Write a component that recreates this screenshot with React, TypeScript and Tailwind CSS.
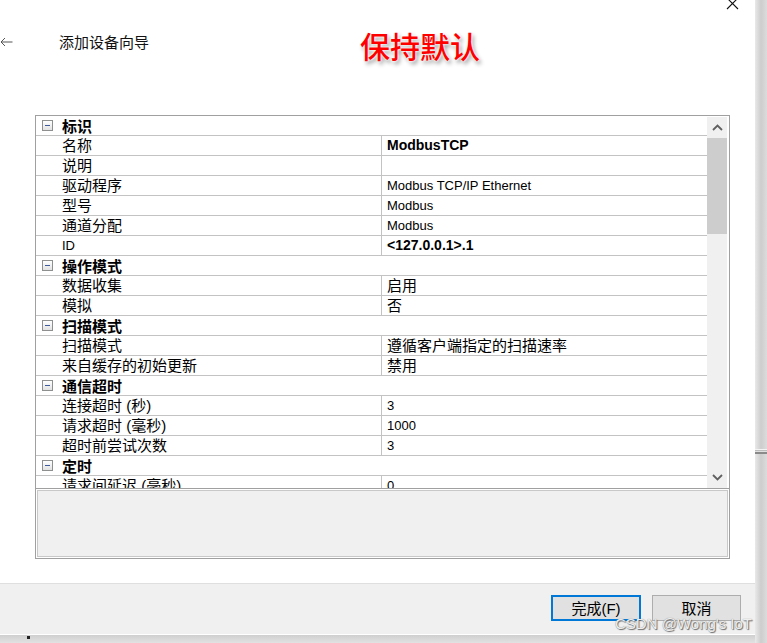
import React from 'react';

// KEPServerEX "添加设备向导" final page — property grid summary with
// the red "保持默认" annotation painted over the header.

type Row =
  | { kind: 'cat'; label: string }
  | { kind: 'prop'; label: string; value: string; bold?: boolean };

const ROWS: Row[] = [
  { kind: 'cat', label: '标识' },
  { kind: 'prop', label: '名称', value: 'ModbusTCP', bold: true },
  { kind: 'prop', label: '说明', value: '' },
  { kind: 'prop', label: '驱动程序', value: 'Modbus TCP/IP Ethernet' },
  { kind: 'prop', label: '型号', value: 'Modbus' },
  { kind: 'prop', label: '通道分配', value: 'Modbus' },
  { kind: 'prop', label: 'ID', value: '<127.0.0.1>.1', bold: true },
  { kind: 'cat', label: '操作模式' },
  { kind: 'prop', label: '数据收集', value: '启用' },
  { kind: 'prop', label: '模拟', value: '否' },
  { kind: 'cat', label: '扫描模式' },
  { kind: 'prop', label: '扫描模式', value: '遵循客户端指定的扫描速率' },
  { kind: 'prop', label: '来自缓存的初始更新', value: '禁用' },
  { kind: 'cat', label: '通信超时' },
  { kind: 'prop', label: '连接超时 (秒)', value: '3' },
  { kind: 'prop', label: '请求超时 (毫秒)', value: '1000' },
  { kind: 'prop', label: '超时前尝试次数', value: '3' },
  { kind: 'cat', label: '定时' },
  { kind: 'prop', label: '请求间延迟 (毫秒)', value: '0' },
];

const hasCjk = (s: string) => /[\u4e00-\u9fff]/.test(s);

const CJK = '[font-family:"Liberation_Sans","Noto_Sans_CJK_SC",sans-serif]';

function MinusBox() {
  return (
    <span className="grid h-[11px] w-[11px] place-items-center border border-[#8e8f8f] bg-linear-to-b from-white to-[#e2e2e2]">
      <span className="h-[1px] w-[5px] bg-[#3f5a9c]" />
    </span>
  );
}

function GridRow({ row }: { row: Row }) {
  if (row.kind === 'cat') {
    return (
      <div className="flex h-[20px] shrink-0 items-center border-b border-[#c3c3c3]">
        <span className="ml-[6px] mr-[9px] flex w-[11px] justify-center">
          <MinusBox />
        </span>
        <span
          className="text-[15px] font-bold leading-[19px] text-black"
          style={{ fontFamily: '"Noto Sans CJK SC", sans-serif' }}
        >
          {row.label}
        </span>
      </div>
    );
  }
  const cjkVal = hasCjk(row.value);
  return (
    <div className="flex h-[20px] shrink-0 border-b border-[#c3c3c3]">
      <div className="w-[26px] shrink-0" />
      <div
        className={
          hasCjk(row.label)
            ? 'w-[320px] shrink-0 border-r border-[#c3c3c3] text-[15px] leading-[19px] text-black'
            : 'w-[320px] shrink-0 border-r border-[#c3c3c3] text-[13px] leading-[19px] text-black'
        }
        style={{ fontFamily: '"Liberation Sans", "Noto Sans CJK SC", sans-serif' }}
      >
        {row.label}
      </div>
      <div
        className={
          row.bold
            ? 'flex-1 pl-[5px] text-[14px] font-bold leading-[19px] text-black'
            : cjkVal
              ? 'flex-1 pl-[5px] text-[15px] leading-[19px] text-black'
              : 'flex-1 pl-[5px] text-[13px] leading-[19px] text-black'
        }
        style={{ fontFamily: '"Liberation Sans", "Noto Sans CJK SC", sans-serif' }}
      >
        {row.value}
      </div>
    </div>
  );
}

function Chevron({ up }: { up?: boolean }) {
  return (
    <svg width="11" height="7" viewBox="0 0 11 7" className="block">
      <polyline
        points={up ? '1,6 5.5,1.5 10,6' : '1,1 5.5,5.5 10,1'}
        fill="none"
        stroke="#606060"
        strokeWidth="1.8"
      />
    </svg>
  );
}

export default function App() {
  return (
    <div className={`flex h-[643px] w-[767px] overflow-hidden bg-[#d8d8d8] ${CJK}`}>
      <div className="relative flex w-[755px] shrink-0 flex-col">
        {/* dialog */}
        <div className="flex h-[634px] flex-col bg-white">
          {/* header */}
          <div className="flex h-[115px] shrink-0 flex-col">
            <div className="flex h-[10px] justify-end overflow-hidden pr-[16px]">
              <svg width="13" height="13" viewBox="0 0 13 13" className="-mt-[3px]">
                <path d="M1 1 L12 12 M12 1 L1 12" stroke="#111" strokeWidth="1.1" />
              </svg>
            </div>
            <div className="flex items-start">
              <svg width="13" height="10" viewBox="0 0 13 10" className="mt-[27px] shrink-0">
                <path d="M12.5 5 H1 M5 1 L1 5 L5 9" fill="none" stroke="#555" strokeWidth="1" />
              </svg>
              <div
                className="ml-[46px] mt-[22px] w-[301px] shrink-0 text-[15px] leading-[20px] text-[#111]"
                style={{ fontFamily: '"Noto Sans CJK SC", sans-serif' }}
              >
                添加设备向导
              </div>
              <div
                className="mt-[16px] text-[30px] font-medium leading-[38px] text-[#ff0000] [text-shadow:0_0_2px_#fff,0_0_3px_#fff,2px_3px_4px_rgba(0,0,0,0.45)]"
                style={{ fontFamily: '"Noto Sans CJK SC", sans-serif' }}
              >
                保持默认
              </div>
            </div>
          </div>

          {/* property grid + description pane */}
          <div className="ml-[35px] flex h-[444px] w-[695px] shrink-0 flex-col border border-[#a0a0a0]">
            <div className="flex h-[372px] shrink-0">
              <div className="flex w-[671px] shrink-0 flex-col overflow-hidden">
                {ROWS.map((r, i) => (
                  <GridRow key={i} row={r} />
                ))}
              </div>
              <div className="mt-[1px] flex w-[20px] shrink-0 flex-col bg-[#f0f0f0]">
                <div className="flex h-[21px] items-center justify-center">
                  <Chevron up />
                </div>
                <div className="h-[96px] bg-[#cdcdcd]" />
                <div className="flex-1" />
                <div className="flex h-[22px] items-center justify-center">
                  <Chevron />
                </div>
              </div>
            </div>
            <div className="flex flex-1 border-t border-[#a0a0a0] p-[1px]">
              <div className="flex-1 border border-[#c8c8c8] bg-[#f0f0f0]" />
            </div>
          </div>

          <div className="flex-1" />

          {/* footer */}
          <div className="flex h-[51px] shrink-0 items-start justify-end gap-[11px] border-t border-[#dfdfdf] bg-[#f0f0f0] pr-[14px] pt-[11px]">
            <button className="flex h-[26px] w-[90px] items-center justify-center border-2 border-[#0078d7] bg-[#e1e1e1] text-[15px] leading-none text-black">
              完成(F)
            </button>
            <button className="flex h-[26px] w-[89px] items-center justify-center border border-[#adadad] bg-[#e1e1e1] text-[15px] leading-none text-black">
              取消
            </button>
          </div>
        </div>
        {/* strip below the dialog */}
        <div className="flex flex-1 border-t border-white bg-linear-to-b from-[#cfcfcf] to-[#e2e2e2] pl-[27px]">
          <span className="mt-[1px] h-[3px] w-[3px] bg-[#222]" />
        </div>

        {/* watermark */}
        <div className="absolute left-[615px] top-[614px] text-[15px] leading-[20px] text-[#eeeeee] [text-shadow:1px_1px_1px_#6a6a6a,0_0_1px_#7a7a7a]">
          CSDN @Wong's IoT
        </div>
      </div>

      {/* right strip: window shadow */}
      <div className="flex flex-1 flex-col bg-linear-to-r from-[#e9e9e9] via-[#cdcdcd] to-[#dcdcdc]">
        <div className="h-[449px]" />
        <div className="h-[1px] bg-[#f4f4f4]" />
        <div className="h-[1px] bg-[#bcbcbc]" />
        <div className="h-[1px] bg-[#e0e0e0]" />
        <div className="h-[2px] bg-[#8a8a8a]" />
      </div>
    </div>
  );
}
